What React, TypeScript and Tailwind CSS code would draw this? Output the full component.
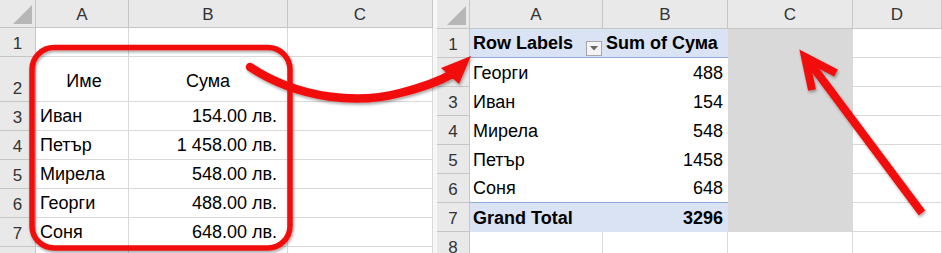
import React from "react";

const font = "font-['Liberation_Sans',Arial,sans-serif]";

const leftRows = [
  { n: "1", h: "h-[29px]", a: "", b: "" },
  { n: "2", h: "h-[45px]", a: "Име", b: "Сума", head: true },
  { n: "3", h: "h-[29px]", a: "Иван", b: "154.00 лв." },
  { n: "4", h: "h-[29px]", a: "Петър", b: "1 458.00 лв." },
  { n: "5", h: "h-[29px]", a: "Мирела", b: "548.00 лв." },
  { n: "6", h: "h-[29px]", a: "Георги", b: "488.00 лв." },
  { n: "7", h: "h-[29px]", a: "Соня", b: "648.00 лв." },
  { n: "", h: "h-[29px]", a: "", b: "" },
];

const pivotRows = [
  { n: "2", a: "Георги", b: "488" },
  { n: "3", a: "Иван", b: "154" },
  { n: "4", a: "Мирела", b: "548" },
  { n: "5", a: "Петър", b: "1458" },
  { n: "6", a: "Соня", b: "648" },
];

function Corner({ w }: { w: string }) {
  return (
    <div className={`${w} h-full bg-[#e9e9e9] border-r border-b border-[#c6c6c6] flex items-end justify-end pr-[3px] pb-[3px]`}>
      <svg width="19" height="19" viewBox="0 0 19 19">
        <polygon points="0,19 19,19 19,0" fill="#b7b7b7" />
      </svg>
    </div>
  );
}

function ColHead({ w, label }: { w: string; label: string }) {
  return (
    <div className={`${w} h-full bg-[#e9e9e9] border-r border-b border-[#c6c6c6] flex items-center justify-center pt-[1px] text-[17px] text-[#333]`}>
      {label}
    </div>
  );
}

function RowHead({ w, label }: { w: string; label: string }) {
  return (
    <div className={`${w} h-full bg-[#e9e9e9] border-r border-b border-[#c6c6c6] flex items-end justify-center text-[17px] leading-[25px] text-[#333]`}>
      {label}
    </div>
  );
}

function LeftSheet() {
  return (
    <div className="w-[433px] flex flex-col shrink-0">
      <div className="flex h-[28px]">
        <Corner w="w-[36px]" />
        <ColHead w="w-[93px]" label="A" />
        <ColHead w="w-[159px]" label="B" />
        <ColHead w="w-[145px]" label="C" />
      </div>
      {leftRows.map((r, i) => (
        <div key={i} className={`flex ${r.h}`}>
          <RowHead w="w-[36px]" label={r.n} />
          <div
            className={`w-[93px] h-full border-r border-b border-[#d9d9d9] flex items-end pl-[4px] ${
              r.head ? "justify-center pb-[6px]" : ""
            }`}
          >
            {r.a}
          </div>
          <div
            className={`w-[159px] h-full border-r border-b border-[#d9d9d9] flex items-end ${
              r.head ? "justify-center pb-[6px]" : "justify-end pr-[10px]"
            }`}
          >
            {r.b}
          </div>
          <div className="w-[145px] h-full border-r border-b border-[#d9d9d9]" />
        </div>
      ))}
    </div>
  );
}

function RightSheet() {
  return (
    <div className="w-[505px] flex flex-col shrink-0">
      <div className="flex h-[29px]">
        <Corner w="w-[33px]" />
        <ColHead w="w-[133px]" label="A" />
        <ColHead w="w-[125px]" label="B" />
        <ColHead w="w-[125px]" label="C" />
        <ColHead w="w-[89px]" label="D" />
      </div>

      {/* pivot header */}
      <div className="flex h-[29px]">
        <RowHead w="w-[33px]" label="1" />
        <div className="w-[133px] h-full bg-[#dae3f3] border-b border-[#8faadc] flex items-end justify-between pl-[3px] font-bold">
          <span>Row Labels</span>
          <div className="w-[16px] h-[15px] mb-[1px] mr-[1px] border border-[#a6a6a6] bg-[#f4f4f4] flex items-center justify-center">
            <svg width="8" height="5" viewBox="0 0 8 5">
              <polygon points="0,0 8,0 4,4.5" fill="#666" />
            </svg>
          </div>
        </div>
        <div className="w-[125px] h-full bg-[#dae3f3] border-b border-[#8faadc] flex items-end pl-[3px] font-bold">
          Sum of Сума
        </div>
        <div className="w-[125px] h-full bg-[#d9d9d9]" />
        <div className="w-[89px] h-full border-r border-b border-[#d9d9d9]" />
      </div>

      {pivotRows.map((r, i) => (
        <div key={r.n} className="flex h-[29px]">
          <RowHead w="w-[33px]" label={r.n} />
          <div
            className={`w-[133px] h-full flex items-end pl-[3px] ${
              i === pivotRows.length - 1 ? "border-b border-[#8faadc]" : ""
            }`}
          >
            {r.a}
          </div>
          <div
            className={`w-[125px] h-full flex items-end justify-end pr-[5px] ${
              i === pivotRows.length - 1 ? "border-b border-[#8faadc]" : ""
            }`}
          >
            {r.b}
          </div>
          <div className="w-[125px] h-full bg-[#d9d9d9]" />
          <div className="w-[89px] h-full border-r border-b border-[#d9d9d9]" />
        </div>
      ))}

      {/* grand total */}
      <div className="flex h-[29px]">
        <RowHead w="w-[33px]" label="7" />
        <div className="w-[133px] h-full bg-[#dae3f3] flex items-end pl-[3px] font-bold">
          Grand Total
        </div>
        <div className="w-[125px] h-full bg-[#dae3f3] flex items-end justify-end pr-[5px] font-bold">
          3296
        </div>
        <div className="w-[125px] h-full bg-[#d9d9d9]" />
        <div className="w-[89px] h-full border-r border-b border-[#d9d9d9]" />
      </div>

      <div className="flex h-[29px]">
        <RowHead w="w-[33px]" label="8" />
        <div className="w-[133px] h-full border-r border-b border-[#d9d9d9]" />
        <div className="w-[125px] h-full border-r border-b border-[#d9d9d9]" />
        <div className="w-[125px] h-full border-r border-b border-[#d9d9d9]" />
        <div className="w-[89px] h-full border-r border-b border-[#d9d9d9]" />
      </div>
    </div>
  );
}

function Annotations() {
  return (
    <svg
      className="absolute inset-0 pointer-events-none"
      width="942"
      height="253"
      viewBox="0 0 942 253"
    >
      <defs>
        <filter id="sh" x="-10%" y="-10%" width="120%" height="120%">
          <feDropShadow dx="1" dy="2" stdDeviation="1.5" floodColor="#000" floodOpacity="0.35" />
        </filter>
      </defs>
      <g filter="url(#sh)">
        <rect x="32" y="47.5" width="258" height="200.5" rx="22" fill="none" stroke="#f20d0d" strokeWidth="5.5" />
        <path
          d="M250,67 C300,100 360,104 400,93 C420,88 438,82 452,74"
          fill="none"
          stroke="#f20d0d"
          strokeWidth="8.5"
          strokeLinecap="round"
        />
        <polygon points="441,68 471,56 459,84" fill="#f20d0d" />
        <line x1="922" y1="213" x2="810" y2="63" stroke="#f20d0d" strokeWidth="8" />
        <polyline
          points="812,90 805,57 836,73"
          fill="none"
          stroke="#f20d0d"
          strokeWidth="8"
          strokeLinejoin="miter"
        />
      </g>
    </svg>
  );
}

export default function App() {
  return (
    <div className={`relative w-[942px] h-[253px] overflow-hidden bg-white text-[18px] leading-[27px] text-black ${font}`}>
      <div className="flex">
        <LeftSheet />
        <div className="w-[4px] shrink-0 bg-[#f7f7f7]" />
        <RightSheet />
      </div>
      <Annotations />
    </div>
  );
}
